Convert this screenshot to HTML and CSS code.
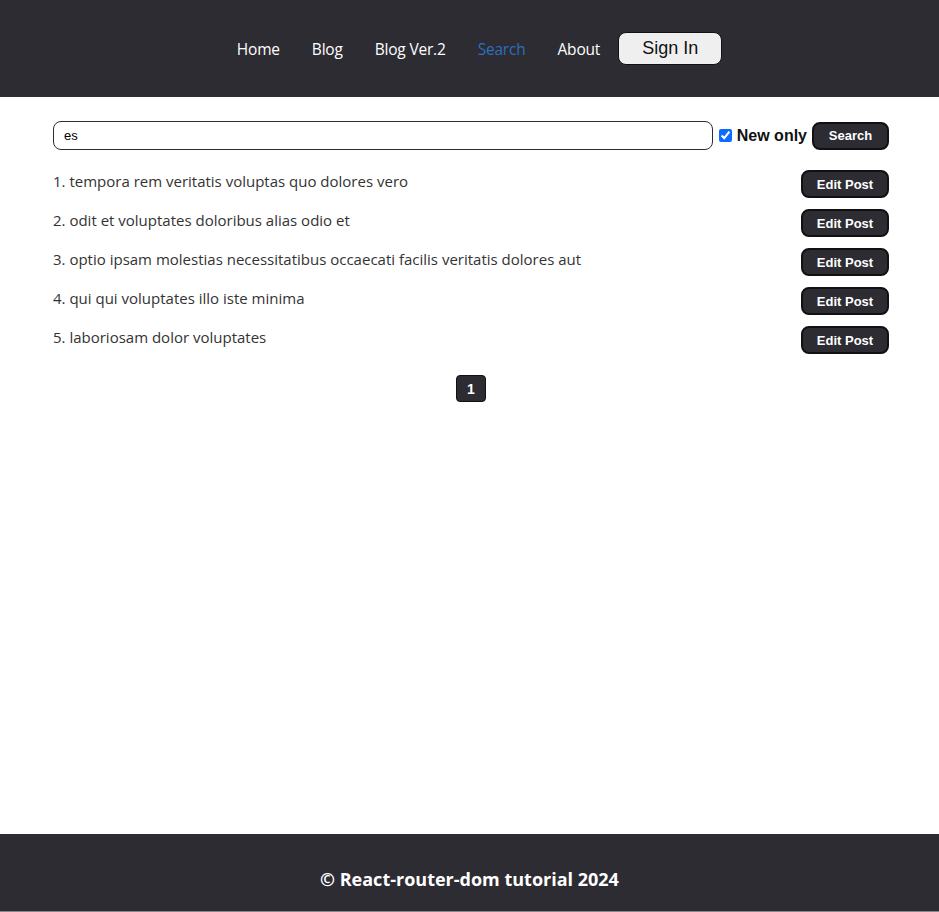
FILE: index.html
```html
<!DOCTYPE html>
<html lang="en">
<head>
<meta charset="utf-8">
<title>Search</title>
<link rel="stylesheet" href="styles.css">
</head>
<body>
<div class="page">
  <header class="header">
    <nav class="nav">
      <a class="nav-link" href="#">Home</a>
      <a class="nav-link" href="#">Blog</a>
      <a class="nav-link" href="#">Blog Ver.2</a>
      <a class="nav-link active" href="#">Search</a>
      <a class="nav-link" href="#">About</a>
      <button class="signin">Sign In</button>
    </nav>
  </header>
  <main class="main">
    <form class="search-form">
      <input class="search-input" type="text" value="es">
      <label class="new-only"><input type="checkbox" checked> New only</label>
      <button class="btn" type="button">Search</button>
    </form>
    <ul class="posts">
      <li class="post"><span class="post-title">1. tempora rem veritatis voluptas quo dolores vero</span><button class="btn btn-edit">Edit Post</button></li>
      <li class="post"><span class="post-title">2. odit et voluptates doloribus alias odio et</span><button class="btn btn-edit">Edit Post</button></li>
      <li class="post"><span class="post-title">3. optio ipsam molestias necessitatibus occaecati facilis veritatis dolores aut</span><button class="btn btn-edit">Edit Post</button></li>
      <li class="post"><span class="post-title">4. qui qui voluptates illo iste minima</span><button class="btn btn-edit">Edit Post</button></li>
      <li class="post"><span class="post-title">5. laboriosam dolor voluptates</span><button class="btn btn-edit">Edit Post</button></li>
    </ul>
    <div class="pagination">
      <button class="btn page-btn">1</button>
    </div>
  </main>
  <footer class="footer">© React-router-dom tutorial 2024</footer>
</div>
</body>
</html>
```
FILE: styles.css
```css
* { box-sizing: border-box; }
html, body { margin: 0; padding: 0; }
body {
  font-family: "Open Sans", "Noto Sans", sans-serif;
  color: #333;
  background: #fff;
}
.page {
  min-height: 912px;
  display: flex;
  flex-direction: column;
}
.header {
  background: #2d2c33;
  height: 97px;
  display: flex;
  align-items: center;
  justify-content: center;
}
.nav {
  display: flex;
  align-items: center;
  padding-left: 4px;
}
.nav-link {
  color: #fff;
  text-decoration: none;
  font-size: 15.5px;
  padding: 0 16px;
  letter-spacing: -0.2px;
}
.nav-link.active { color: #2b6fbe; }
.signin {
  font-family: "Liberation Sans", Arial, sans-serif;
  font-size: 18px;
  color: #111;
  background: #efefef;
  border: 1px solid #111;
  border-radius: 8px;
  width: 104px;
  height: 33px;
  padding: 0;
  margin-left: 2px;
}
.main {
  flex: 1;
  padding: 24px 50px 0 53px;
}
.search-form {
  display: flex;
  align-items: center;
  height: 29px;
}
.search-input {
  flex: 1;
  height: 29px;
  border: 1px solid #2d2c33;
  border-radius: 8px;
  padding: 0 10px;
  font-family: "Liberation Sans", Arial, sans-serif;
  font-size: 13px;
  color: #000;
  outline: none;
}
.new-only {
  display: flex;
  align-items: center;
  font-family: "Liberation Sans", Arial, sans-serif;
  font-weight: bold;
  font-size: 16px;
  color: #111;
  margin: 0 5px 0 6px;
}
.new-only input {
  width: 13px;
  height: 13px;
  margin: 0 5px 0 0;
  accent-color: #0b6cff;
}
.btn {
  font-family: "Liberation Sans", Arial, sans-serif;
  font-weight: bold;
  font-size: 13px;
  color: #fff;
  background: #2d2c33;
  border: 2px solid #111;
  border-radius: 8px;
  height: 28px;
  padding: 0 15px;
  cursor: pointer;
}
.search-form .btn { width: 77px; padding: 0; }
.posts {
  list-style: none;
  margin: 20px 0 0;
  padding: 0;
}
.post {
  display: flex;
  justify-content: space-between;
  align-items: center;
  height: 28px;
  margin-bottom: 11px;
}
.post-title {
  font-size: 15px;
  color: #333;
  margin-top: -6px;
}
.btn-edit { width: 88px; padding: 0; }
.pagination {
  display: flex;
  justify-content: center;
  margin-top: 21px;
}
.page-btn {
  width: 30px;
  height: 27px;
  padding: 0;
  font-size: 14px;
  border-width: 1px;
  border-radius: 4px;
}
.footer {
  background: #2d2c33;
  height: 78px;
  color: #fff;
  font-weight: bold;
  font-size: 18px;
  display: flex;
  justify-content: center;
  align-items: center;
  padding-top: 12px;
  border-bottom: 1px solid #888;
}
```
